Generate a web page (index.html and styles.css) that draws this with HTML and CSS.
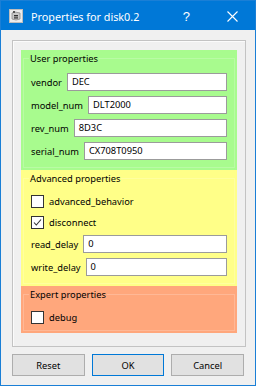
FILE: index.html
```html
<!DOCTYPE html>
<html>
<head>
<meta charset="utf-8">
<link rel="stylesheet" href="styles.css">
</head>
<body>
<div class="window">
  <div class="titlebar">
    <svg class="appicon" width="14" height="14" viewBox="0 0 14 14">
      <rect x="0.5" y="0.5" width="13" height="13" fill="#ececec" stroke="#bdbdbd"/>
      <path d="M3 4 L6 3 L11 4 L11 10 L7 11 L3 10 Z" fill="#c9c9c9" stroke="#8a8a8a" stroke-width="0.8"/>
      <rect x="5" y="6" width="4" height="1.4" fill="#333"/>
      <rect x="5" y="8.2" width="4" height="1.4" fill="#444"/>
      <rect x="4" y="2" width="2" height="2" fill="#555"/>
    </svg>
    <span class="title">Properties for disk0.2</span>
    <span class="help">?</span>
    <svg class="close" width="11" height="11" viewBox="0 0 11 11">
      <path d="M0.5 0.5 L10.5 10.5 M10.5 0.5 L0.5 10.5" stroke="#fff" stroke-width="1.1"/>
    </svg>
  </div>
  <div class="body">
    <div class="frame">
      <div class="group user">
        <div class="gtitle"><span>User properties</span></div>
        <div class="rows">
          <div class="row"><span class="lbl">vendor</span><div class="input">DEC</div></div>
          <div class="row"><span class="lbl">model_num</span><div class="input">DLT2000</div></div>
          <div class="row"><span class="lbl">rev_num</span><div class="input">8D3C</div></div>
          <div class="row"><span class="lbl">serial_num</span><div class="input">CX708T0950</div></div>
        </div>
      </div>
      <div class="group adv">
        <div class="gtitle"><span>Advanced properties</span></div>
        <div class="rows">
          <div class="crow"><span class="box"></span><span class="lbl">advanced_behavior</span></div>
          <div class="crow"><span class="box"><svg width="11" height="11" viewBox="0 0 11 11"><path d="M2 5.5 L4.3 8 L9 2.5" fill="none" stroke="#333" stroke-width="1.1"/></svg></span><span class="lbl">disconnect</span></div>
          <div class="row"><span class="lbl">read_delay</span><div class="input">0</div></div>
          <div class="row"><span class="lbl">write_delay</span><div class="input">0</div></div>
        </div>
      </div>
      <div class="group expert">
        <div class="gtitle"><span>Expert properties</span></div>
        <div class="rows">
          <div class="crow"><span class="box"></span><span class="lbl">debug</span></div>
        </div>
      </div>
    </div>
    <div class="buttons">
      <div class="btn">Reset</div>
      <div class="btn default">OK</div>
      <div class="btn">Cancel</div>
    </div>
  </div>
</div>
</body>
</html>
```
FILE: styles.css
```css
html, body {
  margin: 0;
  padding: 0;
}
body {
  font-family: "Noto Sans", "Open Sans", sans-serif;
  font-size: 9.3px;
  color: #000;
  background: #f0f0f0;
}
.window {
  width: 256px;
  height: 386px;
  box-sizing: border-box;
  border: 1px solid #1a7fd6;
  background: #f0f0f0;
  display: flex;
  flex-direction: column;
}
.titlebar {
  height: 29px;
  background: #0078d7;
  display: flex;
  align-items: center;
  color: #fff;
  flex: none;
}
.appicon {
  margin-left: 8px;
  margin-top: 1px;
}
.title {
  margin-left: 8px;
  font-size: 10.8px;
  margin-top: 1px;
}
.help {
  margin-left: auto;
  margin-right: 37px;
  font-size: 13px;
  font-family: "Liberation Sans", sans-serif;
  margin-top: 1px;
}
.close {
  margin-right: 17px;
  margin-top: 1px;
}
.body {
  padding: 10px 11px 0 11px;
}
.frame {
  width: 234px;
  height: 307px;
  box-sizing: border-box;
  border: 1px solid #c3c3c3;
  box-shadow: inset 1px 1px 0 #fbfbfb;
  padding: 9px 8px 0 8px;
}
.group {
  position: relative;
  padding: 1px 10px 10px 10px;
}
.group::before {
  content: "";
  position: absolute;
  left: 2px;
  right: 2px;
  top: 8px;
  bottom: 2px;
  border: 1px solid rgba(255, 255, 255, 0.2);
  pointer-events: none;
}
.user { background: #a8fb8e; }
.adv { background: #ffff88; }
.expert { background: #ffa77c; padding-bottom: 8px; }
.gtitle {
  height: 15px;
  line-height: 15px;
  margin-left: -2px;
  position: relative;
}
.gtitle span {
  position: relative;
  padding: 0 1px;
}
.user .gtitle span { background: #a8fb8e; }
.adv .gtitle span { background: #ffff88; }
.expert .gtitle span { background: #ffa77c; }
.rows {
  margin-top: 7px;
  display: flex;
  flex-direction: column;
  gap: 5px;
  position: relative;
}
.row {
  display: flex;
  align-items: center;
  gap: 5px;
  height: 18px;
}
.input {
  flex: 1;
  height: 18px;
  box-sizing: border-box;
  background: #fff;
  border: 1px solid #9b9b9b;
  padding-left: 4px;
  line-height: 16px;
}
.crow {
  display: flex;
  align-items: center;
  height: 16px;
}
.box {
  width: 13px;
  height: 13px;
  box-sizing: border-box;
  border: 1px solid #333;
  background: #fff;
  display: flex;
  align-items: center;
  justify-content: center;
  margin-right: 5px;
}
.buttons {
  margin-top: 7px;
  display: flex;
  gap: 7px;
}
.btn {
  width: 73px;
  height: 22px;
  box-sizing: border-box;
  background: #e1e1e1;
  border: 1px solid #adadad;
  display: flex;
  align-items: center;
  justify-content: center;
}
.btn.default {
  border: 1px solid #0078d7;
  box-shadow: inset 0 0 0 1px #e1e1e1;
}
```
